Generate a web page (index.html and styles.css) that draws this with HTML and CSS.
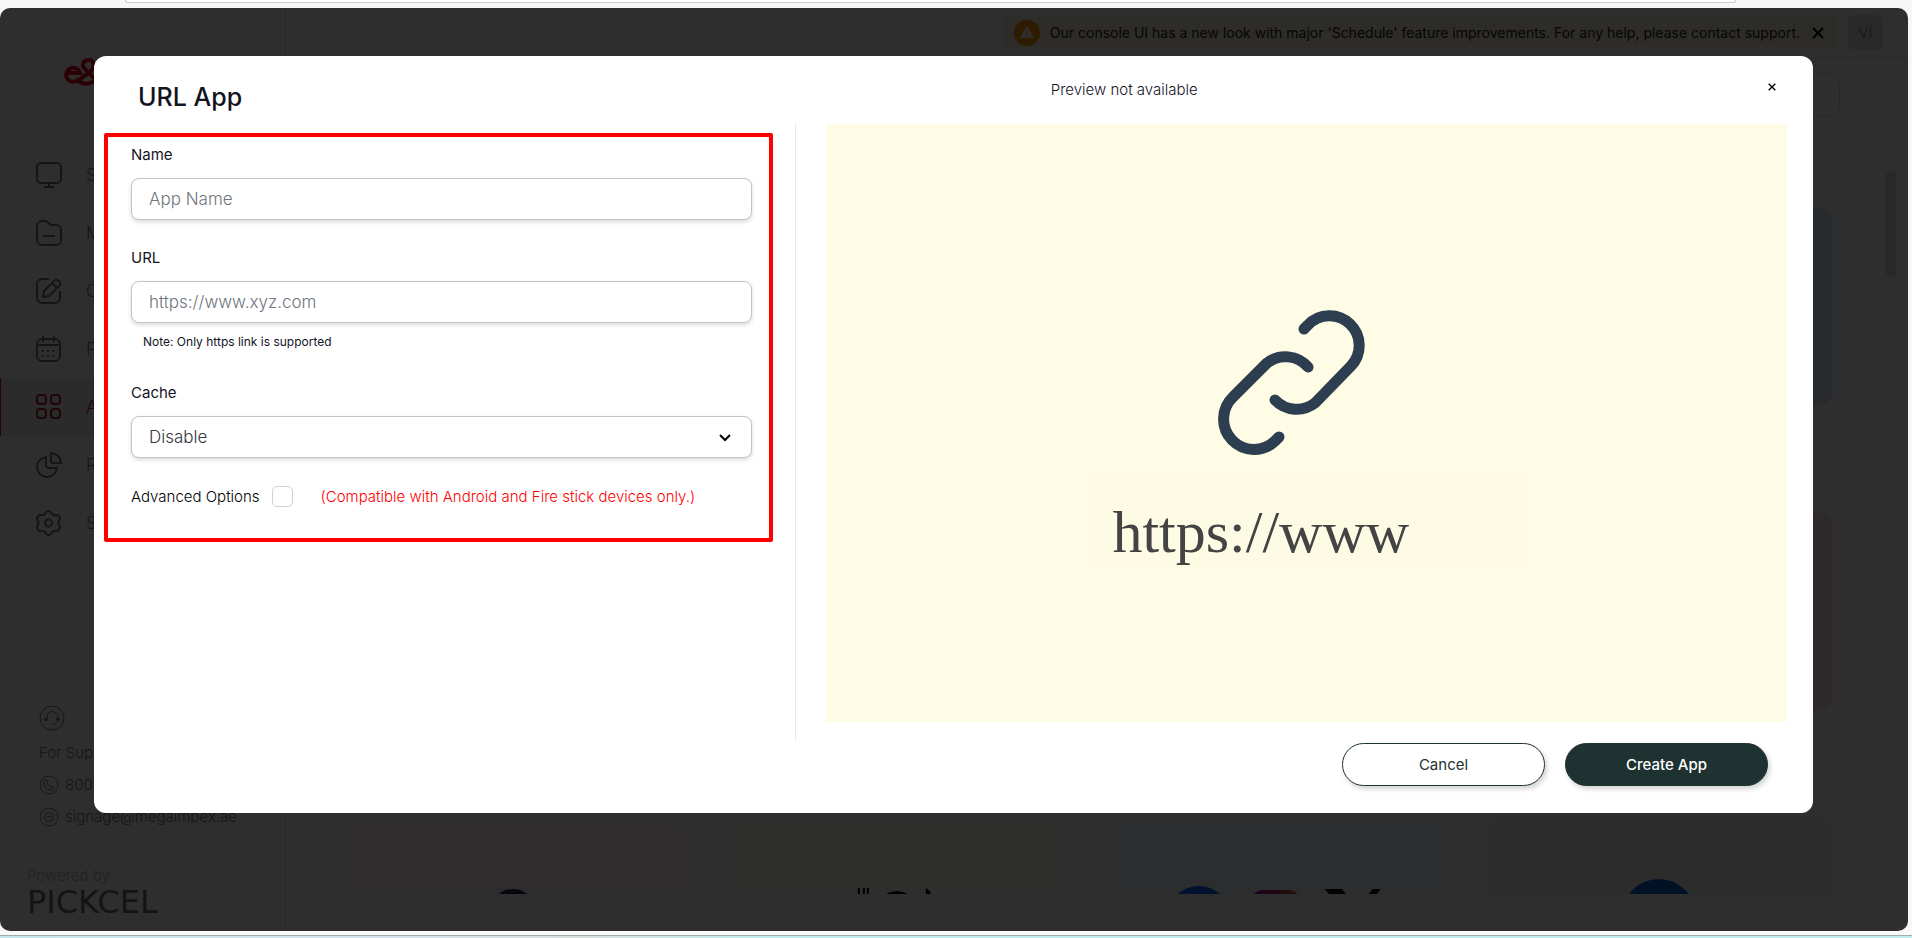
FILE: index.html
```
<!DOCTYPE html>
<html lang="en">
<head>
  <meta charset="UTF-8">
  <meta name="viewport" content="width=device-width, initial-scale=1.0">
  <title>URL App</title>
  <link rel="stylesheet" href="styles.css">
</head>
<body>
  <div class="top-strip"><div class="address-bar"></div></div>

  <div class="frame">
    <aside class="sidebar">
      <svg class="logo" viewBox="0 0 70 32">
        <path d="M4 15H16A7 7 0 1 0 14 22C19 28 30 27 34 17M16 22C18 18 23 17 27 13C32 7 29 2 25 2C19 2 17 8 21 11L33 23"/>
      </svg>
      <nav class="nav">
        <a href="#" class="nav-item">
          <svg viewBox="0 0 26 26"><rect x="1" y="1" width="24" height="20" rx="4"/><path d="M13 21v4M8 25h10"/></svg>
          Screens
        </a>
        <a href="#" class="nav-item">
          <svg viewBox="0 0 26 26"><path d="M1 6a5 5 0 0 1 5-5h3c3 0 4 4 7 4h4a5 5 0 0 1 5 5v10a5 5 0 0 1-5 5H6a5 5 0 0 1-5-5zM7 16h12"/></svg>
          Media
        </a>
        <a href="#" class="nav-item">
          <svg viewBox="0 0 26 26"><path d="M13 1H6a5 5 0 0 0-5 5v14a5 5 0 0 0 5 5h13a5 5 0 0 0 5-5v-7M8 13L19 2q2-1 4 1t1 4L13 18l-6 1zM16 5l5 5"/></svg>
          Compositions
        </a>
        <a href="#" class="nav-item">
          <svg viewBox="0 0 26 26"><rect x="1" y="3" width="23" height="22" rx="5"/><path d="M7 0v6M18 0v6M1 9h23"/><path stroke-dasharray="2 3" d="M6 15h14M6 20h14"/></svg>
          Playlists
        </a>
        <a href="#" class="nav-item active">
          <svg viewBox="0 0 26 26"><rect x="1" y="1" width="9" height="9" rx="3"/><rect x="15" y="1" width="9" height="9" rx="3"/><rect x="1" y="15" width="9" height="9" rx="3"/><rect x="15" y="15" width="9" height="9" rx="3"/></svg>
          Apps
        </a>
        <a href="#" class="nav-item">
          <svg viewBox="0 0 26 26"><path d="M10 5a10 10 0 1 0 11 11h-8q-3 0-3-3zM15 1q9 1 10 10h-8q-2 0-2-2z"/></svg>
          Reports
        </a>
        <a href="#" class="nav-item">
          <svg viewBox="0 0 26 26"><path d="M9 4q1-3 3.500-3T16 4q2 2 5 1 3 1 3 4-3 4 0 8 0 3-3 4-3-1-5 1-1 3-3.500 3T9 22q-2-2-5-1-3-1-3-4 3-4 0-8 0-3 3-4 3 1 5-1z"/><circle cx="12.500" cy="13" r="3.500"/></svg>
          Settings
        </a>
      </nav>
      <div class="support">
        <svg class="support-icon" viewBox="0 0 26 26"><circle cx="13" cy="13" r="12"/><path d="M8 14v-2a5 5 0 0 1 11 0v2M18 17q-1 2-4 2"/><path stroke-width="3" d="M7 13v3M19 13v3"/></svg>
        <p>For Support</p>
        <p class="contact">
          <svg viewBox="0 0 20 20"><circle cx="10" cy="10" r="9"/><path d="M6 5q2-1 3 2l-1 1q1 3 4 4l1-1q3 1 2 3-1 2-4 1-6-2-6-8 0-1 1-2z"/></svg>
          800 6342
        </p>
        <p class="contact">
          <svg viewBox="0 0 20 20"><circle cx="10" cy="10" r="9"/><rect x="6" y="6" width="8" height="8" rx="2"/><path d="M8 9q2 2 4 0"/></svg>
          signage@megaimpex.ae
        </p>
      </div>
      <div class="powered">
        <span>Powered by</span>
        <strong>PICKCEL</strong>
      </div>
    </aside>

    <main class="main">
      <header class="header">
        <div class="banner">
          <svg class="banner-icon" viewBox="0 0 26 26"><circle cx="13" cy="13" r="13" fill="#ff9800"/><path d="M13 6l7 12H6z" fill="#fff"/><path d="M13 10v4M13 15v2" stroke="#ff9800" stroke-width="1"/></svg>
          <span>Our console UI has a new look with major 'Schedule' feature improvements. For any help, please contact support.</span>
          <button class="icon-button" aria-label="Dismiss">
            <svg viewBox="0 0 12 12"><path d="M1 1l10 10M11 1L1 11"/></svg>
          </button>
        </div>
        <div class="avatar">VI</div>
      </header>
      <div class="search"></div>
      <div class="cards">
        <div class="card blue"></div>
        <div class="card pink"></div>
        <div class="card sand"></div>
        <div class="card blue"></div>
        <div class="card sand"></div>
        <div class="card gray"></div>
        <div class="card blue"></div>
        <div class="card pink"></div>
        <div class="card rose">
          <svg viewBox="0 0 344 76"><circle cx="170" cy="93" r="19" fill="none" stroke="#10303c" stroke-width="6"/></svg>
        </div>
        <div class="card sand">
          <svg viewBox="0 0 344 76"><path d="M134 70v6M139 70v6M143 70v6" stroke="#000" stroke-width="2"/><circle cx="172" cy="93" r="20"/><path d="M201 70q5 3 5 6h-5z"/></svg>
        </div>
        <div class="card sky">
          <svg viewBox="0 0 344 76"><defs><linearGradient id="insta"><stop stop-color="#6d20b0"/><stop offset="0.5" stop-color="#b01f52"/><stop offset="1" stop-color="#d88a30"/></linearGradient></defs><circle cx="92" cy="99" r="31" fill="#0866ff"/><rect x="144" y="72" width="50" height="50" rx="12" fill="url(#insta)"/><path d="M218 71h17l5 6h-17zM266 71h8l-5 6h-8z"/></svg>
        </div>
        <div class="card gray">
          <svg viewBox="0 0 344 76"><circle cx="171" cy="98" r="37" fill="#0866d8"/></svg>
        </div>
      </div>
      <div class="scroll-thumb"></div>
    </main>

    <div class="overlay">
      <section class="modal" role="dialog" aria-labelledby="modalTitle">
        <div class="left">
          <h1 id="modalTitle">URL App</h1>
          <form class="form">
            <div class="field">
              <label for="appName">Name</label>
              <input type="text" id="appName" class="control" placeholder="App Name">
            </div>
            <div class="field">
              <label for="appUrl">URL</label>
              <input type="text" id="appUrl" class="control" placeholder="https://www.xyz.com">
              <p class="note">Note: Only https link is supported</p>
            </div>
            <div class="field">
              <label for="cache">Cache</label>
              <div class="select-wrap">
                <select id="cache" class="control">
                  <option>Disable</option>
                  <option>Enable</option>
                </select>
                <svg class="chevron" viewBox="0 0 12 8"><path d="M1 1l5 5 5-5"/></svg>
              </div>
            </div>
            <div class="advanced">
              <label for="advanced">Advanced Options</label>
              <input type="checkbox" id="advanced">
              <span class="warning">(Compatible with Android and Fire stick devices only.)</span>
            </div>
          </form>
        </div>

        <div class="divider"></div>

        <div class="right">
          <div class="preview-head">
            <p>Preview not available</p>
            <button class="icon-button close" aria-label="Close">
              <svg viewBox="0 0 12 12"><path d="M1 1l10 10M11 1L1 11"/></svg>
            </button>
          </div>
          <div class="preview">
            <svg class="link-icon" viewBox="0 0 146 146">
              <path d="M85 19l4-4A29 29 0 0 1 132 56L96 93A30 30 0 0 1 56 90"/>
              <path d="M89 57A30 30 0 0 0 48 53L14 87A30 30 0 0 0 56 131l4-4"/>
            </svg>
            <div class="preview-url">https://www</div>
          </div>
          <div class="actions">
            <button class="btn">Cancel</button>
            <button class="btn btn-primary">Create App</button>
          </div>
        </div>
      </section>
    </div>
  </div>

  <div class="bottom-strip"></div>
</body>
</html>
```
FILE: styles.css
```
* {
  box-sizing: border-box;
}
body {
  display: flex;
  flex-direction: column;
  height: 100vh;
  margin: 0;
  font-family: Inter, "Liberation Sans", sans-serif;
  font-size: 15px;
  font-weight: 300;
  color: #14141f;
  background: #f7f7f7;
  overflow: hidden;
}
p, h1 {
  margin: 0;
}
button, input, select {
  font-family: inherit;
  font-weight: inherit;
}
.top-strip {
  height: 8px;
  padding: 0 176px 0 125px;
}
.address-bar {
  height: 3px;
  background: white;
  border: 1px solid #ccc;
  border-top: none;
  border-radius: 0 0 10px 10px;
}
.bottom-strip {
  height: 7px;
  border-top: 4px solid #fafafa;
  background: linear-gradient(90deg, #c5e6ec, #d5e4ee 20%, #d9dfdd 30%, #bfeeec 40%);
  box-shadow: inset 0 1px #a0adad;
}

/* page behind the dialog */
.frame {
  position: relative;
  display: flex;
  flex: 1;
  min-height: 0;
  margin-right: 4px;
  border-radius: 10px;
  background: white;
  overflow: hidden;
}
.sidebar {
  display: flex;
  flex-direction: column;
  flex-shrink: 0;
  width: 286px;
  border-right: 1px solid #dedede;
  color: #777;
}
.sidebar svg {
  flex-shrink: 0;
  fill: none;
  stroke: #777;
}
.sidebar .logo {
  width: 70px;
  height: 32px;
  margin: 50px 0 56px 64px;
  stroke: #e00018;
  stroke-width: 4;
}
.nav-item {
  display: flex;
  align-items: center;
  gap: 24px;
  height: 58px;
  padding-left: 35px;
  border-left: 1px solid transparent;
  font-size: 17px;
  color: #777;
  text-decoration: none;
}
.nav-item svg {
  width: 26px;
  height: 26px;
  stroke-width: 2;
}
.nav-item.active {
  border-color: #d02030;
  background: #eee;
  color: #b02030;
}
.nav-item.active svg {
  stroke: #b02030;
}
.support {
  display: flex;
  flex-direction: column;
  gap: 12px;
  margin-top: auto;
  padding-left: 39px;
  line-height: 20px;
}
.support-icon {
  width: 26px;
  height: 26px;
}
.contact {
  display: flex;
  align-items: center;
  gap: 6px;
}
.contact svg {
  width: 20px;
  height: 20px;
}
.powered {
  padding: 39px 0 13px 27px;
  line-height: 20px;
}
.powered span {
  display: block;
  color: #b5b5b5;
}
.powered strong {
  font-family: "DejaVu Sans", sans-serif;
  font-size: 32px;
  font-weight: normal;
  line-height: 32px;
  color: #70707f;
}
.main {
  position: relative;
  display: flex;
  flex-direction: column;
  flex: 1;
  min-width: 0;
  padding-bottom: 37px;
}
.header {
  display: flex;
  flex-shrink: 0;
  justify-content: flex-end;
  align-items: center;
  gap: 10px;
  height: 50px;
  padding-right: 25px;
  border-bottom: 1px solid #dedede;
}
.banner {
  display: flex;
  align-items: center;
  gap: 10px;
  height: 32px;
  padding: 0 12px;
  border-radius: 6px;
  background: #fdf0e4;
  font-size: 14px;
  font-weight: 400;
  color: #222;
}
.banner-icon {
  width: 26px;
  height: 26px;
}
.icon-button {
  display: flex;
  padding: 2px;
  border: none;
  background: none;
  cursor: pointer;
}
.icon-button svg {
  width: 12px;
  height: 12px;
  stroke: black;
  stroke-width: 2;
}
.avatar {
  width: 35px;
  height: 35px;
  border-radius: 6px;
  background: #e2e2e2;
  line-height: 35px;
  text-align: center;
  color: #888;
}
.search {
  flex-shrink: 0;
  height: 44px;
  margin: 15px 68px 0 57px;
  border: 1px solid #dedede;
  border-radius: 10px;
}
.cards {
  display: grid;
  grid-template-columns: repeat(4, 1fr);
  grid-auto-rows: 197px;
  gap: 108px 38px;
  min-height: 0;
  margin-top: 91px;
  padding: 0 76px 0 57px;
  overflow: hidden;
}
.card {
  border-radius: 12px;
}
.card svg {
  display: block;
  width: 100%;
}
.blue { background: #dcebf8; }
.pink { background: #fbe9f0; }
.rose { background: #fff4f6; }
.sand { background: #fffcf4; }
.sky { background: #f4faff; }
.gray { background: #f2f4fa; }
.scroll-thumb {
  position: absolute;
  top: 163px;
  right: 12px;
  width: 10px;
  height: 106px;
  border-radius: 5px;
  background: #dedede;
}

/* dialog */
.overlay {
  position: absolute;
  inset: 0;
  display: flex;
  padding: 48px 95px 118px 94px;
  background: rgba(0, 0, 0, 0.82);
}
.modal {
  display: flex;
  flex: 1;
  border-radius: 12px;
  background: white;
}
.left {
  width: 41%;
  padding-left: 10px;
}
.left h1 {
  padding: 25px 0 20px 34px;
  font-size: 25px;
  font-weight: 500;
  line-height: 32px;
}
.form {
  display: flex;
  flex-direction: column;
  gap: 28px;
  margin-right: 26px;
  padding: 8px 17px 31px 23px;
  border: 4px solid red;
  border-radius: 2px;
}
.field label {
  display: block;
  margin-bottom: 13px;
  font-weight: 400;
  line-height: 20px;
}
.control {
  display: block;
  width: 100%;
  height: 42px;
  padding: 0 17px;
  border: 1px solid #c4c4c4;
  border-radius: 8px;
  background: white;
  box-shadow: 0 2px 4px rgba(0, 0, 0, 0.15);
  font-size: 17px;
  color: #343a40;
}
.control::placeholder {
  color: #6f767d;
}
.note {
  padding: 10px 0 4px 12px;
  font-size: 12px;
  font-weight: 400;
  line-height: 18px;
}
.select-wrap {
  position: relative;
}
select.control {
  appearance: none;
}
.chevron {
  position: absolute;
  top: 18px;
  right: 21px;
  width: 12px;
  height: 8px;
  fill: none;
  stroke: black;
  stroke-width: 2;
  pointer-events: none;
}
.advanced {
  display: flex;
  align-items: center;
  line-height: 20px;
  color: black;
}
.advanced input {
  appearance: none;
  width: 21px;
  height: 21px;
  margin: 0 28px 0 12px;
  border: 1px solid #ced0da;
  border-radius: 5px;
}
.warning {
  color: red;
}
.divider {
  width: 1px;
  margin: 67px 0 73px -4px;
  background: #e8e8e8;
}
.right {
  display: flex;
  flex-direction: column;
  flex: 1;
  padding: 0 26px 20px 30px;
}
.preview-head {
  display: flex;
  justify-content: space-between;
  height: 68px;
  padding: 23px 9px 0 225px;
  line-height: 22px;
}
.close {
  align-self: flex-start;
  margin-top: 2px;
}
.close svg {
  width: 8px;
  height: 8px;
}
.preview {
  display: flex;
  flex-direction: column;
  align-items: center;
  justify-content: center;
  gap: 18px;
  height: 598px;
  padding-top: 36px;
  background: #fffce6;
}
.link-icon {
  width: 146px;
  height: 146px;
  margin-right: 28px;
  overflow: visible;
  fill: none;
  stroke: #2c3e50;
  stroke-width: 11;
  stroke-linecap: round;
}
.preview-url {
  width: 440px;
  padding: 29px 26px 11px;
  background: #fefbe5;
  font-family: "Liberation Serif", serif;
  font-size: 60px;
  font-weight: 400;
  line-height: 58px;
  color: #444;
}
.actions {
  display: flex;
  justify-content: flex-end;
  gap: 20px;
  padding: 21px 19px 0 0;
}
.btn {
  width: 203px;
  height: 43px;
  border: 1px solid #1e3231;
  border-radius: 22px;
  background: white;
  box-shadow: 2px 3px 5px rgba(0, 0, 0, 0.18);
  font-size: 15px;
  font-weight: 400;
  color: #1e3231;
  cursor: pointer;
}
.btn-primary {
  background: #1e3231;
  font-weight: 500;
  color: white;
}
```
